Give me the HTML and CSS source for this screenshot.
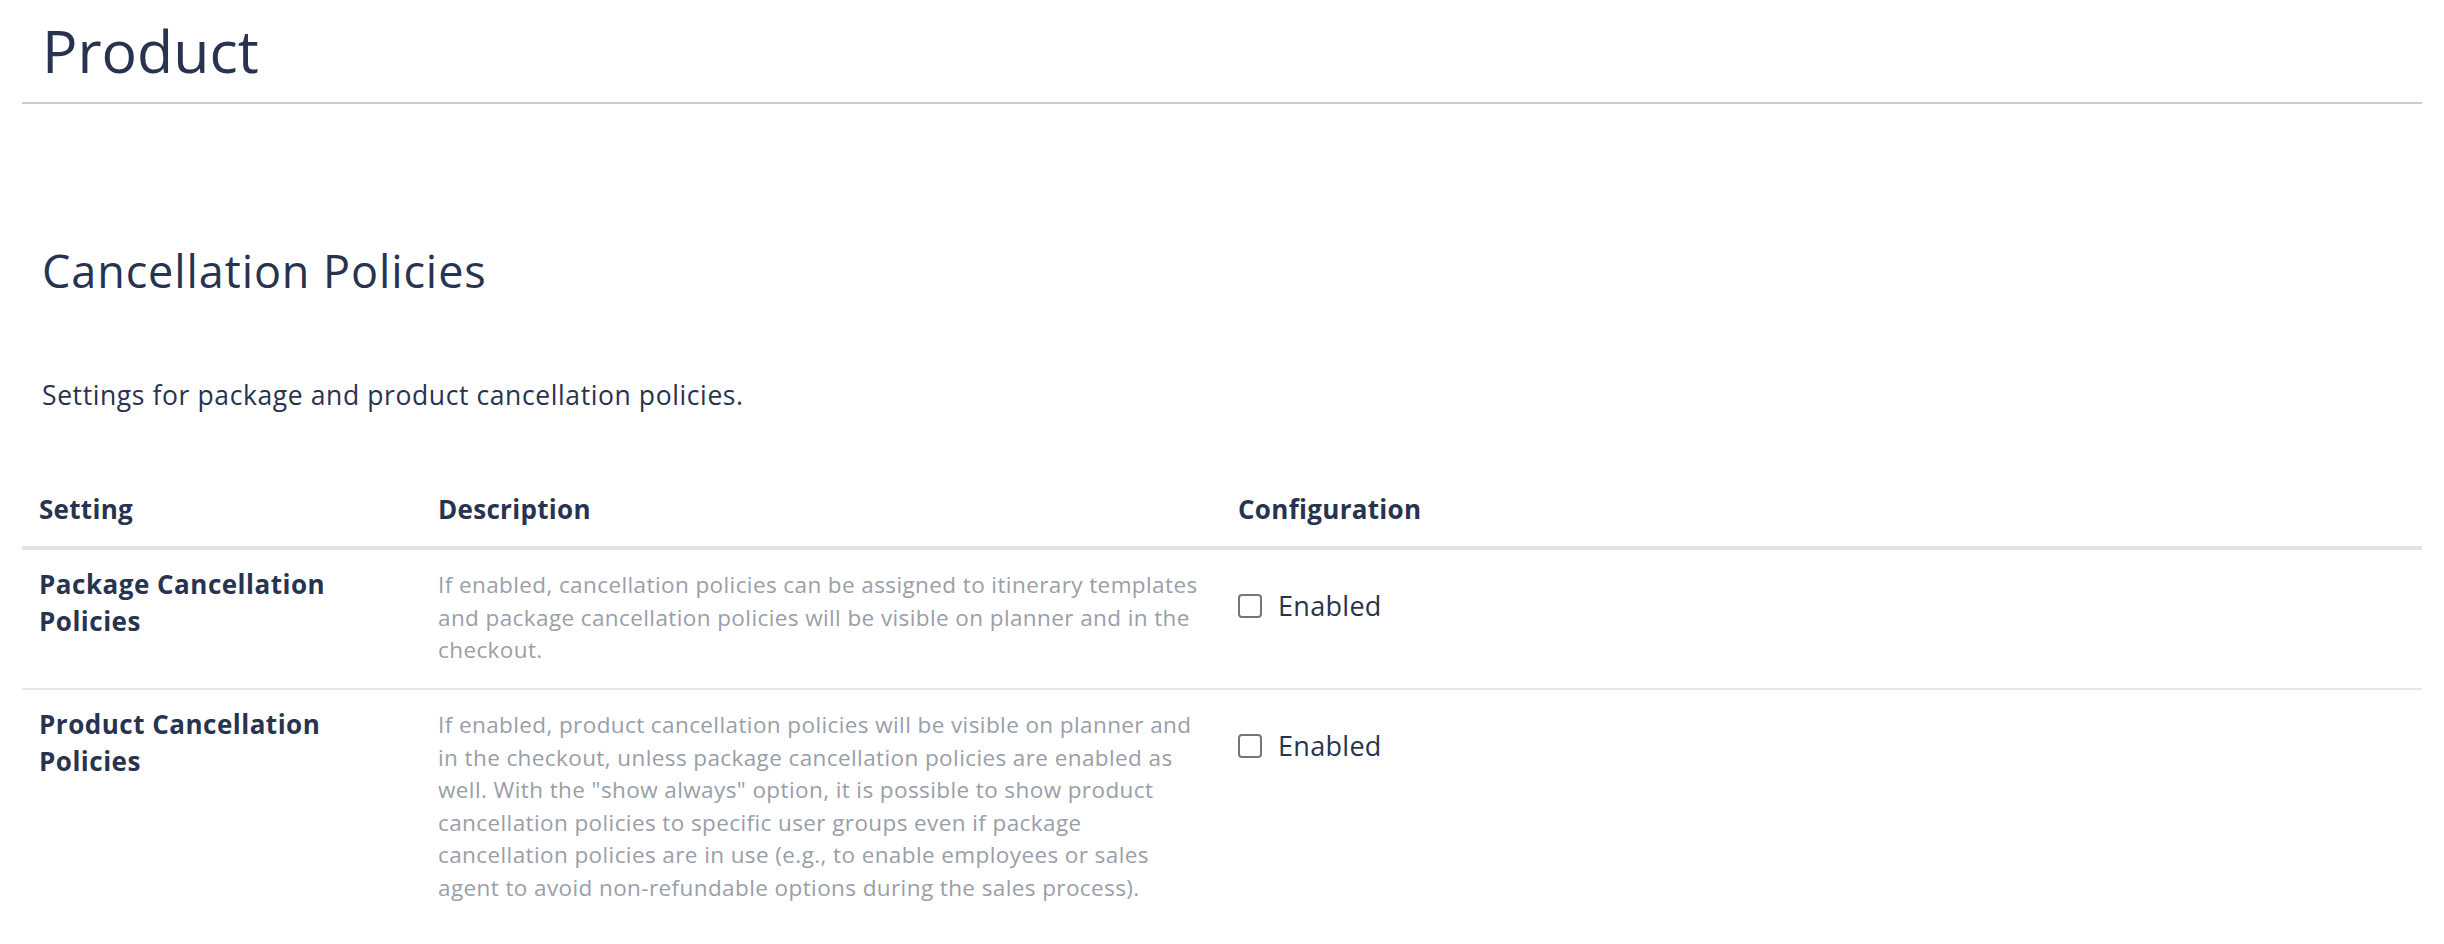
FILE: index.html
```html
<!DOCTYPE html>
<html lang="en">
<head>
<meta charset="utf-8">
<title>Product</title>
<link rel="stylesheet" href="styles.css">
</head>
<body>
<div class="page">
  <header class="page-header">
    <h1 class="page-title">Product</h1>
  </header>

  <section class="section">
    <h2 class="section-title">Cancellation Policies</h2>
    <p class="section-intro">Settings for package and product cancellation policies.</p>

    <table class="settings">
      <thead>
        <tr>
          <th class="col-setting">Setting</th>
          <th class="col-desc">Description</th>
          <th class="col-config">Configuration</th>
        </tr>
      </thead>
      <tbody>
        <tr>
          <td class="cell-name">Package Cancellation Policies</td>
          <td class="cell-desc">If enabled, cancellation policies can be assigned to itinerary templates and package cancellation policies will be visible on planner and in the checkout.</td>
          <td class="cell-config"><label class="check"><span class="box"></span>Enabled</label></td>
        </tr>
        <tr>
          <td class="cell-name">Product Cancellation Policies</td>
          <td class="cell-desc">If enabled, product cancellation policies will be visible on planner and in the checkout, unless package cancellation policies are enabled as well. With the "show always" option, it is possible to show product cancellation policies to specific user groups even if package cancellation policies are in use (e.g., to enable employees or sales agent to avoid non-refundable options during the sales process).</td>
          <td class="cell-config"><label class="check"><span class="box"></span>Enabled</label></td>
        </tr>
      </tbody>
    </table>
  </section>
</div>
</body>
</html>
```

FILE: styles.css
```css
* { box-sizing: border-box; }

html, body {
  margin: 0;
  padding: 0;
  background: #ffffff;
}

body {
  font-family: "Open Sans", "Noto Sans", sans-serif;
  color: #283350;
}

.page {
  padding: 0 22px;
}

.page-header {
  border-bottom: 2px solid #cccccc;
  height: 104px;
  padding: 0 0 0 20px;
}

.page-title {
  margin: 0;
  font-size: 59px;
  font-weight: 400;
  line-height: 100px;
}

.section {
  padding-top: 137px;
}

.section-title {
  margin: 0 0 0 20px;
  font-size: 45px;
  font-weight: 400;
  line-height: 60px;
  letter-spacing: 0.9px;
}

.section-intro {
  margin: 76px 0 0 20px;
  font-size: 26.5px;
  line-height: 36px;
  letter-spacing: 0.6px;
}

.settings {
  width: 100%;
  border-collapse: collapse;
  margin-top: 78px;
}

.settings th {
  text-align: left;
  font-size: 26px;
  font-weight: 700;
  line-height: 36px;
  letter-spacing: 0.3px;
  padding: 0 17px 19px;
  border-bottom: 4px solid #e3e3e3;
}

.col-setting { width: 399px; }
.col-desc { width: 800px; }

.settings td {
  vertical-align: top;
  border-bottom: 2px solid #e6e6e6;
}

.settings tbody tr:last-child td {
  border-bottom: none;
}

.settings td.cell-name {
  padding: 16px 17px 0;
  font-size: 26px;
  font-weight: 700;
  line-height: 37px;
  letter-spacing: 0.5px;
}

.settings td.cell-desc {
  padding: 19px 8px 21.5px 17px;
  font-size: 22.5px;
  line-height: 32.5px;
  letter-spacing: 0.4px;
  color: #9a9ea8;
}

.settings td.cell-config {
  padding: 37.5px 17px 0;
}

.check {
  display: inline-flex;
  align-items: center;
  gap: 16px;
  font-size: 27px;
  line-height: 36px;
  letter-spacing: 0.3px;
  color: #283350;
}

.box {
  display: inline-block;
  width: 24px;
  height: 24px;
  border: 2px solid #767676;
  border-radius: 4px;
  background: #ffffff;
}
```
